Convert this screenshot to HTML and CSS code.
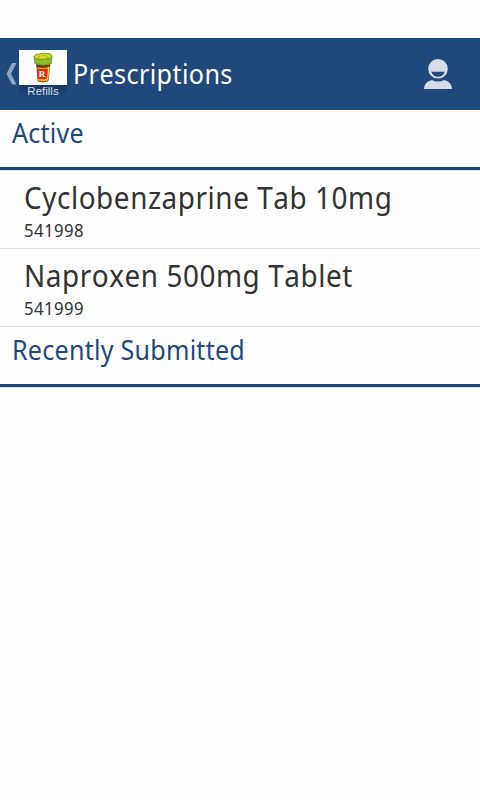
FILE: index.html
```html
<!DOCTYPE html>
<html lang="en">
<head>
  <meta charset="utf-8"/>
  <meta name="viewport" content="width=device-width, initial-scale=1"/>
  <title>Prescriptions</title>
  <link rel="stylesheet" href="styles.css">
</head>
<body>
<header class="action-bar">
  <svg class="back" viewBox="0 0 12 22">
    <path d="M6 0H10.5L5 10.7L10.5 21.5H6L0.5 10.7Z"/>
  </svg>
  <div class="logo">
    <svg class="bottle" viewBox="0 0 48 35">
      <path d="M17.5 13L19 31Q24 33 29 31L31 13Z" fill="#f5a312" stroke="#6b3a10" stroke-width=".8"/>
      <path d="M17.5 14.5Q24 16 31 14.5L30.8 17Q24 18.5 17.8 17Z" fill="#5a3a10"/>
      <path d="M28.5 17L30.5 16.5L29 30L27.5 31Z" fill="#ffd84a"/>
      <path d="M17.8 18.5Q23 19.5 29 18.5L28 28.5Q23 29.5 19 28.5Z" fill="#df2a1c"/>
      <path d="M15 6Q24 12 33 6L32.5 13.5Q24 16.5 15.8 13.5Z" fill="#8dbb30" stroke="#6c8f20" stroke-width=".7"/>
      <path d="M15.3 6.5Q16 3.5 20 4Q25 2.5 28 3.5Q33 3 32.7 6.5Q32 9 28 8.7Q24 10.5 20 9Q15.5 9 15.3 6.5Z" fill="#d3d822" stroke="#65801a" stroke-width=".7"/>
      <path d="M19 7L21 6M24 6L26 5M28 7L29.5 6" stroke="#8b9a1c" stroke-width=".8"/>
      <text x="23" y="26.5" text-anchor="middle">R</text>
    </svg>
    <span class="logo-label">Refills</span>
  </div>
  <h1 class="title"><span class="narrow">Prescriptions</span></h1>
  <svg class="profile" viewBox="0 0 28 30">
    <path fill-rule="evenodd" d="M14 0A9.8 9.8 0 1 1 14 19.6A9.8 9.8 0 1 1 14 0ZM7.3 12.7Q9 17.8 14 17.8Q19 17.8 20.7 12.7Z"/>
    <path d="M0 30Q.5 22.5 7.8 21Q14 24 20.2 21Q27.5 22.5 28 30Z"/>
  </svg>
</header>

<main>
  <h2 class="section"><span class="narrow">Active</span></h2>
  <ul class="list">
    <li class="item">
      <div class="name narrow">Cyclobenzaprine Tab 10mg</div>
      <div class="number narrow">541998</div>
    </li>
    <li class="item">
      <div class="name narrow">Naproxen 500mg Tablet</div>
      <div class="number narrow">541999</div>
    </li>
  </ul>
  <h2 class="section"><span class="narrow">Recently Submitted</span></h2>
</main>
</body>
</html>
```
FILE: styles.css
```css
body {
  margin: 0;
  padding-top: 38px;
  background: #fefefe;
  --brand: #1f497d;
  --divider: #e3e3e3;
  font-family: 'Noto Sans', sans-serif;
  font-kerning: none;
  color: #333;
}

h1,
h2 {
  margin: 0;
  font-weight: normal;
}

/* slightly condensed lettering */
.narrow {
  display: block;
  transform: scaleX(0.93);
  transform-origin: left;
}

.action-bar {
  display: flex;
  align-items: center;
  box-sizing: border-box;
  height: 72px;
  padding: 0 28px 0 6px;
  background: var(--brand);
}

.back {
  width: 12px;
  height: 22px;
  margin-right: 1px;
  fill: #8fa4be;
}

.logo {
  display: flex;
  flex-direction: column;
  width: 48px;
  height: 48px;
  background: linear-gradient(#173864 35px, #1f497d);
}

.bottle {
  display: block;
  width: 48px;
  height: 35px;
  background: #fff;
}

.bottle text {
  font: bold 9px 'Liberation Serif', serif;
  fill: #fff;
}

.logo-label {
  font: 11.5px/13px 'Liberation Sans', sans-serif;
  text-align: center;
  color: #d5deea;
}

.title {
  flex: 1;
  margin-left: 6px;
  font-size: 27px;
  line-height: 36px;
  letter-spacing: 0.45px;
  color: #fff;
}

.profile {
  width: 28px;
  height: 30px;
  fill: #d5dce7;
}

.section {
  box-sizing: border-box;
  height: 61px;
  padding: 5px 12px 0;
  border-bottom: 1px solid var(--divider);
  box-shadow: inset 0 -3px var(--brand);
  font-size: 27px;
  line-height: 36px;
  letter-spacing: 0.25px;
  color: var(--brand);
}

.list {
  list-style: none;
  margin: 0;
  padding: 0;
}

.item {
  box-sizing: border-box;
  height: 78px;
  padding: 6px 24px 0;
  border-bottom: 1px solid var(--divider);
}

.name {
  font-size: 30px;
  line-height: 42px;
  letter-spacing: 0.6px;
}

.number {
  font-size: 18px;
  line-height: 22px;
  letter-spacing: 0.45px;
}
```
